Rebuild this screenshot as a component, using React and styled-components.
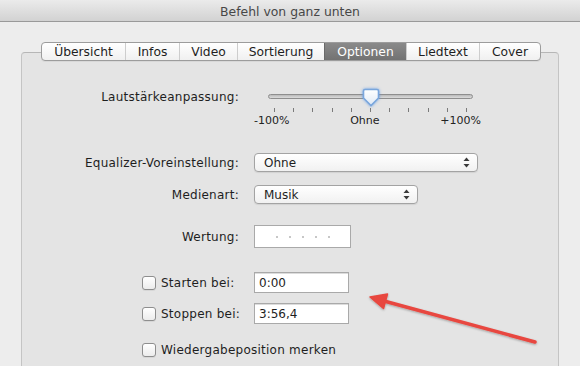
import styled, { createGlobalStyle } from 'styled-components';

const GlobalStyle = createGlobalStyle`
    * { box-sizing: border-box; }
    body {
        margin: 0;
        background: #ededed;
        font-family: 'Lucida Grande', 'DejaVu Sans', sans-serif;
        color: #1e1e1e;
    }
`;

const tabs = [
    { name: 'Übersicht', w: 83 },
    { name: 'Infos', w: 54 },
    { name: 'Video', w: 58 },
    { name: 'Sortierung', w: 87 },
    { name: 'Optionen', w: 82, active: true },
    { name: 'Liedtext', w: 73 },
    { name: 'Cover', w: 61 },
];

function Arrows () {
    return (
        <svg width="7" height="11" viewBox="0 0 7 11">
            <path d="M3.5 0.5 L6.5 4 H0.5 Z" fill="#3a3a3a" />
            <path d="M3.5 10.5 L6.5 7 H0.5 Z" fill="#3a3a3a" />
        </svg>
    );
}

export default function App () {

    return (
        <>
            <GlobalStyle />
            <Window>
                <TitleBar>Befehl von ganz unten</TitleBar>

                <GroupBox>
                    <TabBar>
                        {tabs.map((t) => (
                            <Tab key={t.name} $w={t.w} $active={t.active}>{t.name}</Tab>
                        ))}
                    </TabBar>

                    <Row $top={27}>
                        <Label $start>Lautstärkeanpassung:</Label>
                        <Slider>
                            <Track />
                            <Thumb>
                                <svg width="18" height="20" viewBox="0 0 18 20">
                                    <defs>
                                        <linearGradient id="tg" x1="0" y1="0" x2="0" y2="1">
                                            <stop offset="0" stopColor="#ffffff" />
                                            <stop offset="1" stopColor="#dfe9f5" />
                                        </linearGradient>
                                    </defs>
                                    <path d="M3 1.5 H15 Q16.5 1.5 16.5 3 V10 L9 17.5 L1.5 10 V3 Q1.5 1.5 3 1.5 Z" fill="url(#tg)" stroke="#7aa6dc" strokeWidth="1.6" />
                                </svg>
                            </Thumb>
                            <Ticks>
                                {Array.from({ length: 11 }).map((_, i) => <Tick key={i} />)}
                            </Ticks>
                            <TickLabels>
                                <span>-100%</span>
                                <span>Ohne</span>
                                <span>+100%</span>
                            </TickLabels>
                        </Slider>
                    </Row>

                    <Row $top={25}>
                        <Label>Equalizer-Voreinstellung:</Label>
                        <Popup $w={224}>Ohne<Arrows /></Popup>
                    </Row>

                    <Row $top={13}>
                        <Label>Medienart:</Label>
                        <Popup $w={164}>Musik<Arrows /></Popup>
                    </Row>

                    <Row $top={21}>
                        <Label>Wertung:</Label>
                        <Rating>
                            {Array.from({ length: 5 }).map((_, i) => <Dot key={i} />)}
                        </Rating>
                    </Row>

                    <Row $top={24}>
                        <CheckLabel><Check />Starten bei:</CheckLabel>
                        <TimeField>0:00</TimeField>
                    </Row>

                    <Row $top={10}>
                        <CheckLabel><Check />Stoppen bei:</CheckLabel>
                        <TimeField>3:56,4</TimeField>
                    </Row>

                    <Row $top={17}>
                        <CheckLabel $wide><Check />Wiedergabeposition merken</CheckLabel>
                    </Row>
                </GroupBox>

                <Annotation width="185" height="65" viewBox="0 0 185 65">
                    <defs>
                        <filter id="sh" x="-10%" y="-30%" width="120%" height="160%">
                            <feDropShadow dx="0" dy="1" stdDeviation="1" floodColor="#000" floodOpacity="0.3" />
                        </filter>
                    </defs>
                    <g filter="url(#sh)">
                        <line x1="24" y1="16" x2="175" y2="57" stroke="#e8473f" strokeWidth="3.5" strokeLinecap="round" />
                        <path d="M10 12 L27.5 9 L23.5 23.5 Z" fill="#e8473f" stroke="#e8473f" strokeWidth="1.5" strokeLinejoin="round" />
                    </g>
                </Annotation>
            </Window>
        </>
    );

}

const Window = styled.div`
    position: relative;
    width: 580px;
    height: 366px;
    overflow: hidden;
    background: #ededed;
`;

const TitleBar = styled.div`
    height: 22px;
    padding-top: 1px;
    display: flex;
    align-items: center;
    justify-content: center;
    background: linear-gradient(#ebebeb, #d2d2d2);
    border-bottom: 1px solid #9a9a9a;
    font-size: 12.4px;
    color: #474747;
`;

const GroupBox = styled.div`
    margin: 30px 0 0 21px;
    width: 538px;
    height: 340px;
    background: #e4e4e4;
    border: 1px solid #c4c4c4;
    border-top-color: #b6b6b6;
    border-radius: 4px;
    display: flex;
    flex-direction: column;
`;

const TabBar = styled.div`
    margin: -11px 0 0 19px;
    height: 19px;
    display: flex;
    align-self: flex-start;
    background: linear-gradient(#ffffff, #f0f0f0);
    border: 1px solid #9c9c9c;
    border-radius: 4px;
    overflow: hidden;
    box-shadow: 0 1px 0 rgba(0, 0, 0, 0.05);
`;

const Tab = styled.div`
    width: ${(p) => p.$w}px;
    display: flex;
    align-items: center;
    justify-content: center;
    font-size: 12.3px;
    color: ${(p) => (p.$active ? '#ffffff' : '#1e1e1e')};
    background: ${(p) => (p.$active ? 'linear-gradient(#8a8a8a, #727272)' : 'transparent')};
    border-left: 1px solid ${(p) => (p.$active ? '#6a6a6a' : '#cdcdcd')};

    &:first-child {
        border-left: none;
    }
`;

const Row = styled.div`
    margin-top: ${(p) => p.$top}px;
    display: grid;
    grid-template-columns: 218px 1fr;
    column-gap: 14px;
    align-items: center;
`;

const Label = styled.div`
    justify-self: end;
    align-self: ${(p) => (p.$start ? 'start' : 'center')};
    line-height: 18px;
    font-size: 12px;
    letter-spacing: 0.25px;
    margin-right: 1px;
    white-space: nowrap;
`;

const Slider = styled.div`
    position: relative;
    width: 230px;
    height: 40px;
`;

const Track = styled.div`
    margin: 6px 0 0 14px;
    width: 205px;
    height: 5px;
    border-radius: 3px;
    border: 1px solid #8e8e8e;
    background: linear-gradient(#b9b9b9, #dcdcdc);
`;

const Thumb = styled.div`
    position: absolute;
    left: 108px;
    top: 0;
    width: 18px;
    height: 20px;
    filter: drop-shadow(0 0 1.5px rgba(90, 150, 230, 0.8));

    svg { display: block; }
`;

const Ticks = styled.div`
    margin: 9px 0 0 20px;
    width: 193px;
    height: 4px;
    display: flex;
    justify-content: space-between;
`;

const Tick = styled.div`
    width: 1px;
    height: 4px;
    background: #7a7a7a;
`;

const TickLabels = styled.div`
    margin-top: 3px;
    width: 227px;
    display: flex;
    justify-content: space-between;
    font-size: 11px;
    line-height: 12px;
    color: #222;
`;

const Popup = styled.div`
    width: ${(p) => p.$w}px;
    height: 19px;
    padding: 0 7px 0 9px;
    display: flex;
    align-items: center;
    justify-content: space-between;
    font-size: 12px;
    background: linear-gradient(#ffffff, #f1f1f1);
    border: 1px solid #a3a3a3;
    border-radius: 4px;
    box-shadow: 0 1px 1px rgba(0, 0, 0, 0.08);

    svg { display: block; }
`;

const Rating = styled.div`
    width: 97px;
    height: 23px;
    padding-left: 21px;
    display: flex;
    align-items: center;
    gap: 11px;
    background: #ffffff;
    border: 1px solid #a9a9a9;
`;

const Dot = styled.div`
    width: 2px;
    height: 2px;
    border-radius: 50%;
    background: #b4b4b4;
`;

const CheckLabel = styled.div`
    grid-column: ${(p) => (p.$wide ? '1 / span 2' : 'auto')};
    justify-self: start;
    padding-left: 120px;
    display: flex;
    align-items: center;
    gap: 5px;
    line-height: 18px;
    font-size: 12px;
    letter-spacing: 0.25px;
    white-space: nowrap;
`;

const Check = styled.div`
    flex: none;
    width: 14px;
    height: 14px;
    border: 1px solid #8e8e8e;
    border-radius: 3px;
    background: linear-gradient(#ffffff, #ececec);
    box-shadow: 0 1px 0 rgba(0, 0, 0, 0.06);
`;

const TimeField = styled.div`
    width: 95px;
    height: 21px;
    padding-left: 4px;
    display: flex;
    align-items: center;
    font-size: 12px;
    background: #ffffff;
    border: 1px solid #a9a9a9;
    box-shadow: inset 0 1px 0 #dcdcdc;
`;

const Annotation = styled.svg`
    position: absolute;
    left: 360px;
    top: 285px;
`;
